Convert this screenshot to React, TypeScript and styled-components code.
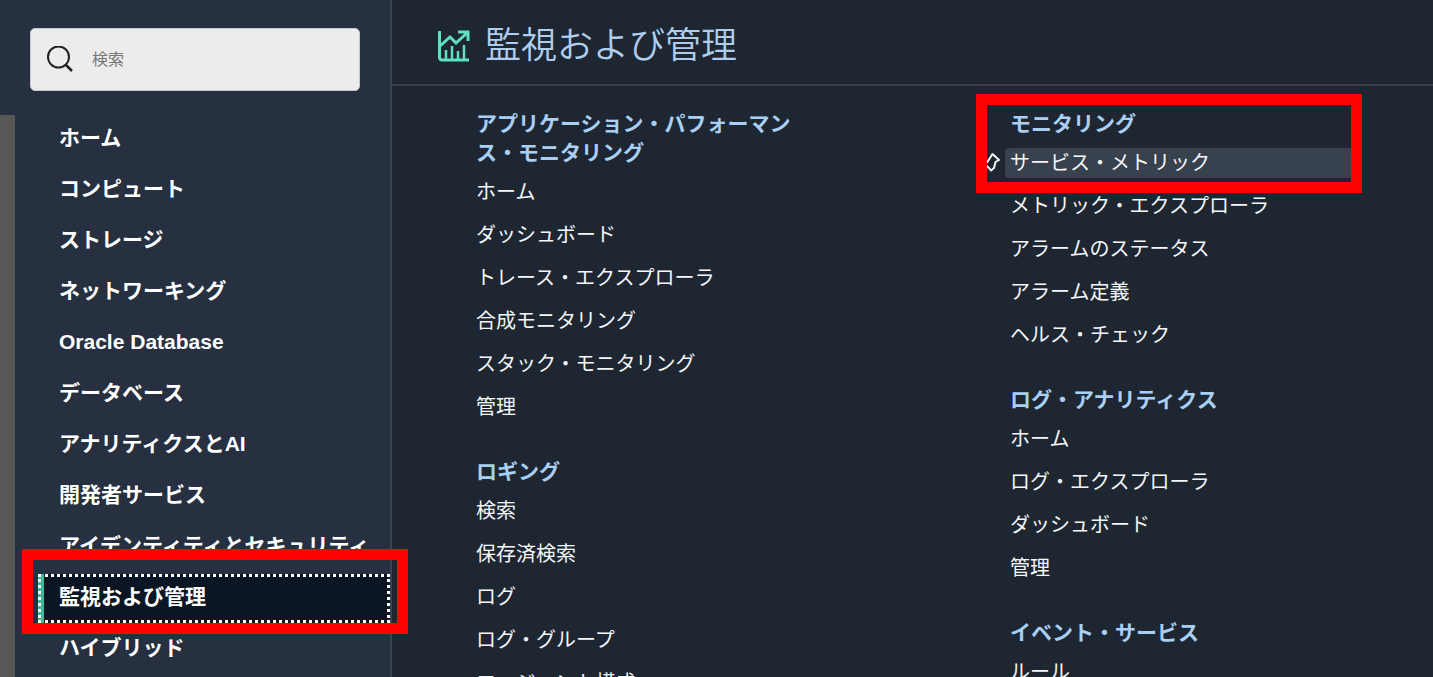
import React from "react";
import styled, { createGlobalStyle } from "styled-components";

const GlobalStyle = createGlobalStyle`
  *, *::before, *::after { box-sizing: border-box; }
  body {
    margin: 0;
    background: #1e2731;
    color: #f4f6f8;
    font-family: "Liberation Sans", "Noto Sans CJK JP", sans-serif;
  }
  ul { list-style: none; margin: 0; padding: 0; }
`;

const Shell = styled.div`
  display: grid;
  grid-template-columns: 392px minmax(0, 1fr);
  height: 100vh;
  overflow: hidden;
`;

const Sidebar = styled.nav`
  position: relative;
  z-index: 1;
  display: flex;
  flex-direction: column;
  min-height: 0;
  background: #263040;
  border-right: 2px solid #3a4350;
`;

const SearchBox = styled.label`
  display: flex;
  align-items: center;
  flex: none;
  gap: 18px;
  height: 63px;
  margin: 28px 30px 24px;
  padding: 0 16px;
  background: #ececec;
  border: 1px solid #c3c9d0;
  border-radius: 5px;
  color: #222;
`;

const SearchInput = styled.input`
  flex: 1;
  min-width: 0;
  padding: 0;
  border: 0;
  outline: 0;
  background: transparent;
  color: #222;
  font: inherit;
  font-size: 16px;
  &::placeholder { color: #777; opacity: 1; }
`;

const MenuArea = styled.div`
  flex: 1;
  border-left: 15px solid #595755;
  padding-left: 23px;
`;

const MenuList = styled.ul`
  display: flex;
  flex-direction: column;
  gap: 2px;
`;

const MenuItem = styled.li`
  position: relative;
`;

const MenuLink = styled.a<{ $active?: boolean }>`
  display: flex;
  align-items: center;
  height: 49px;
  padding: 0 0 4px 18px;
  border: 3px dotted ${(p) => (p.$active ? "#fff" : "transparent")};
  background: ${(p) =>
    p.$active
      ? "linear-gradient(90deg, #3fb896 0 6px, #0a1623 6px) border-box"
      : "none"};
  color: #fff;
  font-size: 21px;
  font-weight: 700;
  line-height: 30px;
  text-decoration: none;
  white-space: nowrap;
`;

const Marker = styled.span`
  position: absolute;
  border: 11px solid #fe0000;
  pointer-events: none;
`;

const MenuMarker = styled(Marker)`
  inset: -25px -18px -11px -16px;
`;

const GroupMarker = styled(Marker)`
  inset: -15px -10px auto -29px;
  height: 99px;
`;

const Main = styled.main`
  min-width: 0;
`;

const Header = styled.header`
  display: flex;
  align-items: center;
  gap: 15px;
  height: 86px;
  padding: 8px 46px 0;
  border-bottom: 2px solid #39424c;
`;

const Title = styled.h1`
  margin: 0;
  color: #afcdee;
  font-size: 36px;
  font-weight: 350;
  line-height: 48px;
`;

const Columns = styled.div`
  display: grid;
  grid-template-columns: repeat(2, minmax(0, 1fr));
  column-gap: 187px;
  padding: 23px 81px 0 79px;
`;

const Column = styled.div`
  display: flex;
  flex-direction: column;
  gap: 35px;
`;

const Group = styled.section`
  position: relative;
`;

const GroupTitle = styled.h2`
  margin: 0 0 10px;
  padding: 0 12px 0 5px;
  color: #a9cff5;
  font-size: 21px;
  font-weight: 700;
  line-height: 29px;
`;

const LinkList = styled.ul`
  display: flex;
  flex-direction: column;
  gap: 13px;
`;

const LinkItem = styled.li`
  position: relative;
`;

const ServiceLink = styled.a<{ $highlighted?: boolean }>`
  display: block;
  padding: 0 5px;
  border-radius: 4px;
  background: ${(p) => (p.$highlighted ? "#38414e" : "transparent")};
  color: #f4f6f8;
  font-size: 20px;
  line-height: 30px;
  text-decoration: none;
  white-space: nowrap;
`;

const PinIcon = styled.svg`
  position: absolute;
  left: -25px;
  top: 3px;
`;

const menu = [
  "ホーム",
  "コンピュート",
  "ストレージ",
  "ネットワーキング",
  "Oracle Database",
  "データベース",
  "アナリティクスとAI",
  "開発者サービス",
  "アイデンティティとセキュリティ",
  "監視および管理",
  "ハイブリッド",
];
const activeMenu = "監視および管理";

type GroupData = { title: string; links: string[]; pinned?: string };

const columns: GroupData[][] = [
  [
    {
      title: "アプリケーション・パフォーマンス・モニタリング",
      links: [
        "ホーム",
        "ダッシュボード",
        "トレース・エクスプローラ",
        "合成モニタリング",
        "スタック・モニタリング",
        "管理",
      ],
    },
    {
      title: "ロギング",
      links: ["検索", "保存済検索", "ログ", "ログ・グループ", "エージェント構成"],
    },
  ],
  [
    {
      title: "モニタリング",
      pinned: "サービス・メトリック",
      links: [
        "サービス・メトリック",
        "メトリック・エクスプローラ",
        "アラームのステータス",
        "アラーム定義",
        "ヘルス・チェック",
      ],
    },
    {
      title: "ログ・アナリティクス",
      links: ["ホーム", "ログ・エクスプローラ", "ダッシュボード", "管理"],
    },
    { title: "イベント・サービス", links: ["ルール"] },
  ],
];

const ServiceGroup = ({ title, links, pinned }: GroupData) => (
  <Group>
    <GroupTitle>{title}</GroupTitle>
    <LinkList>
      {links.map((link) => (
        <LinkItem key={link}>
          {link === pinned && (
            <PinIcon width="22" height="22" viewBox="0 0 22 22" fill="none" stroke="#f4f6f8" strokeWidth="2" strokeLinejoin="round" aria-hidden="true">
              <path d="M12.500 3L19 9L15.500 11L14 17L11 19.500L9 17L5 13.500L8 10Z" />
            </PinIcon>
          )}
          <ServiceLink href="#" $highlighted={link === pinned}>{link}</ServiceLink>
        </LinkItem>
      ))}
    </LinkList>
    {pinned && <GroupMarker />}
  </Group>
);

const App = () => (
  <>
    <GlobalStyle />
    <Shell>
      <Sidebar>
        <SearchBox>
          <svg width="27" height="28" viewBox="0 0 27 28" fill="none" stroke="currentColor" strokeWidth="2" aria-hidden="true">
            <circle cx="11.500" cy="11" r="10.500" />
            <path d="M18.500 18.500L25 25" strokeWidth="2.500" />
          </svg>
          <SearchInput type="text" placeholder="検索" aria-label="検索" />
        </SearchBox>
        <MenuArea>
          <MenuList>
            {menu.map((item) => (
              <MenuItem key={item}>
                <MenuLink href="#" $active={item === activeMenu}>{item}</MenuLink>
                {item === activeMenu && <MenuMarker />}
              </MenuItem>
            ))}
          </MenuList>
        </MenuArea>
      </Sidebar>
      <Main>
        <Header>
          <svg width="32" height="32" viewBox="0 0 32 32" fill="none" stroke="#5fe0c4" strokeWidth="3" aria-hidden="true">
            <path d="M1.500 1V27Q1.500 30 4.500 30H31" />
            <path d="M2 16L12 7L18 13L29 3M20 2H30V11" />
            <path d="M8 30V20M14 30V16M20 30V21M26 30V15" strokeWidth="2.500" />
          </svg>
          <Title>監視および管理</Title>
        </Header>
        <Columns>
          {columns.map((groups, index) => (
            <Column key={index}>
              {groups.map((group) => (
                <ServiceGroup key={group.title} {...group} />
              ))}
            </Column>
          ))}
        </Columns>
      </Main>
    </Shell>
  </>
);

export default App;
